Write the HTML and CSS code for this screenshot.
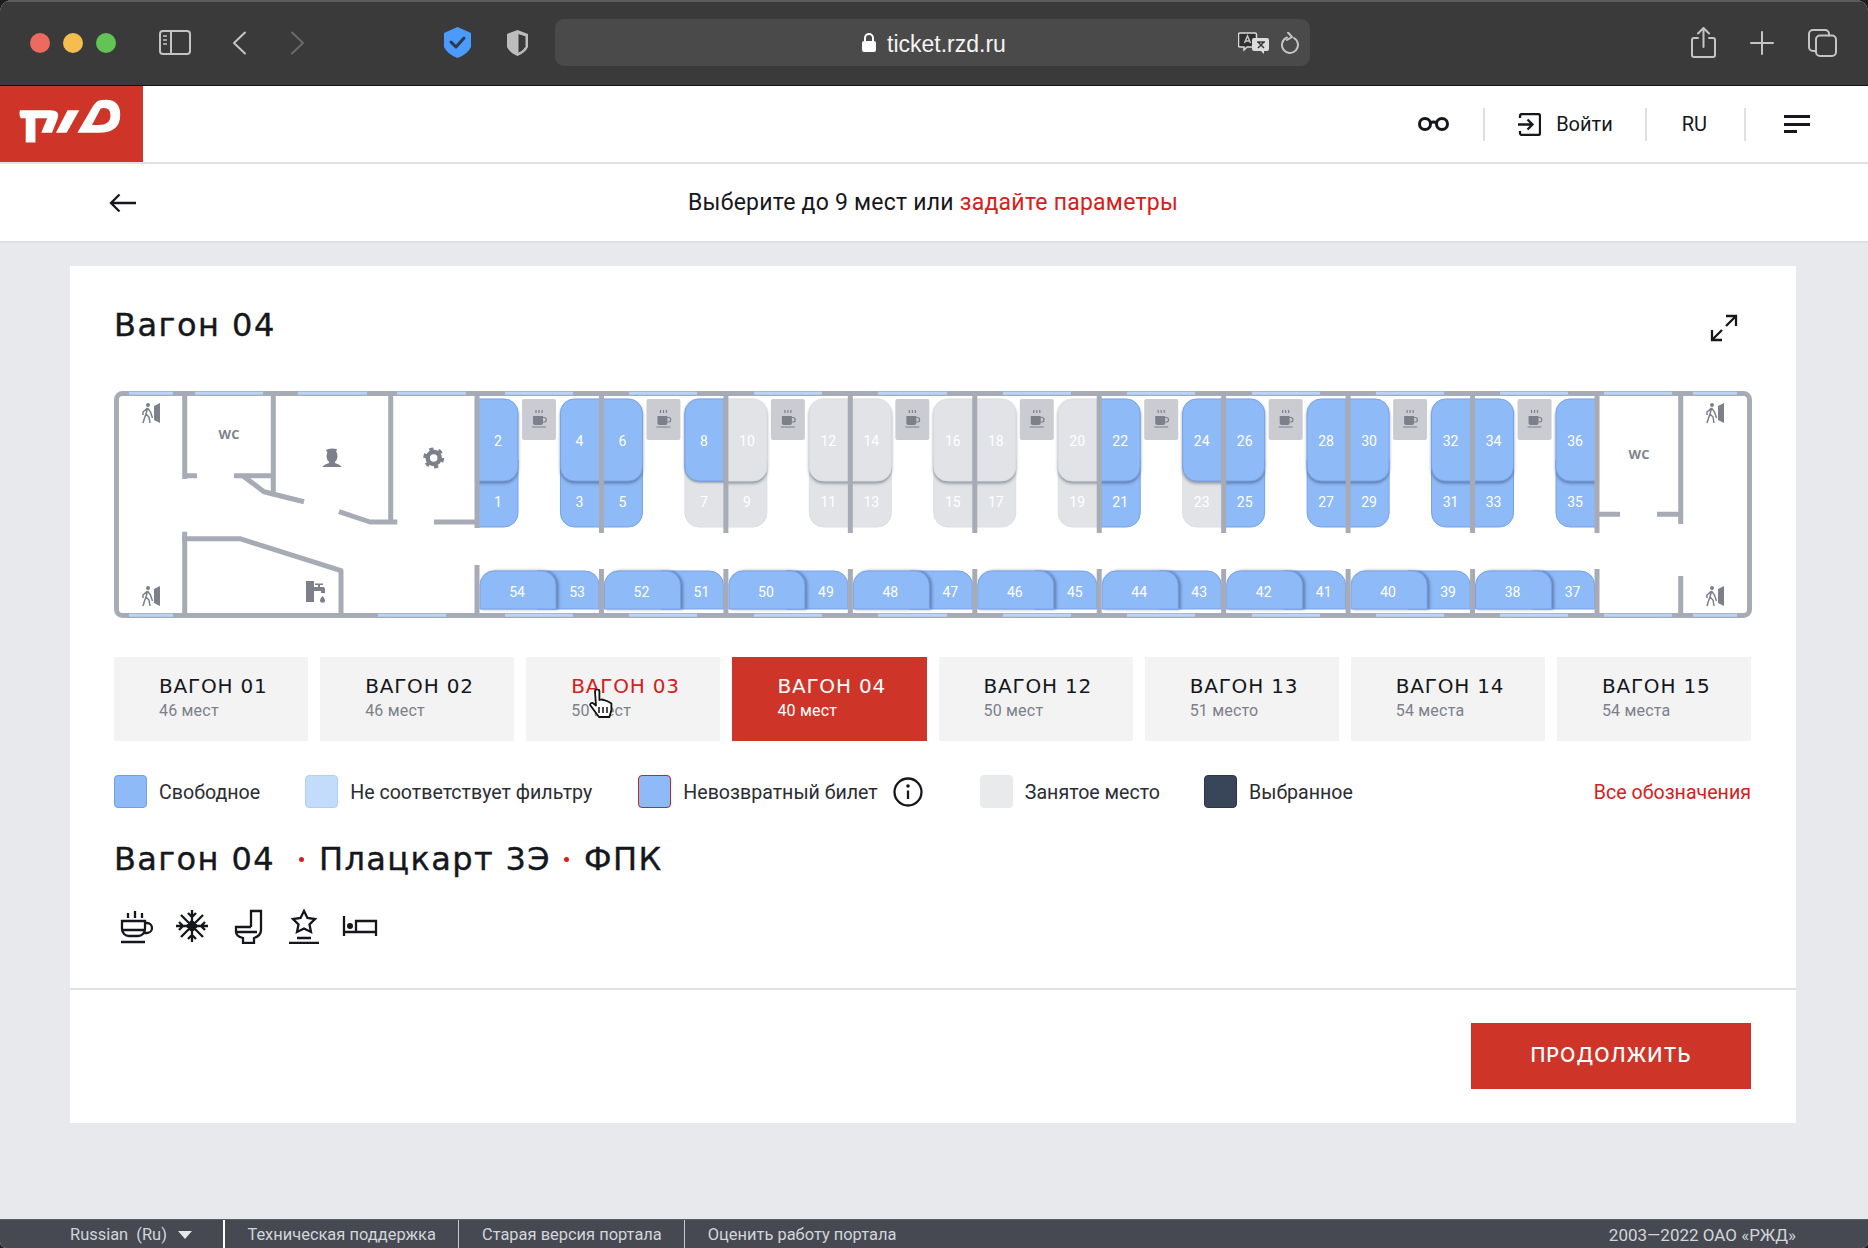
FILE: index.html
```html
<!DOCTYPE html>
<html lang="ru">
<head>
<meta charset="utf-8">
<title>РЖД — выбор мест</title>
<link rel="stylesheet" href="styles.css">
</head>
<body>
<div class="window">
  <div class="toolbar">
    <span class="light red"></span><span class="light yellow"></span><span class="light green"></span>
    <svg class="tb-sidebar" viewBox="0 0 32 25" width="32" height="25"><rect x="1" y="1" width="30" height="23" rx="3" class="tb-line"/><path d="M12 1V24" class="tb-line"/><path d="M4 6h4M4 10h4M4 14h4" class="tb-thin"/></svg>
    <svg class="tb-back" viewBox="0 0 15 24" width="15" height="24"><path d="M13 1.500 2 12l11 10.500" class="tb-line"/></svg>
    <svg class="tb-fwd" viewBox="0 0 15 24" width="15" height="24"><path d="M2 1.500 13 12 2 22.500" class="tb-dim"/></svg>
    <svg class="tb-shield1" viewBox="0 0 27 31" width="27" height="31"><path d="M13.500 0 27 6v14q-3 7-13.500 11Q3 27 0 20V6Z" class="blue-fill"/><path d="m7 15 5 5 8-9" class="check"/></svg>
    <svg class="tb-shield2" viewBox="0 0 23 28" width="23" height="28"><path d="M11.500 1 22 5v13q-3 6-10.500 9Q4 24 1 18V5Z" class="gray-fill"/><path d="M12 4.500 20 7v10.500q-2 4.500-8 7Z" class="dark-fill"/></svg>
    <div class="url">
      <svg class="lock" viewBox="0 0 14 19" width="14" height="19"><rect x="0" y="8" width="14" height="11" rx="2" class="white-fill"/><path d="M3 9V5a4 4 0 0 1 8 0v4" class="lock-arc"/></svg>
      <span class="url-text">ticket.rzd.ru</span>
      <svg class="translate" viewBox="0 0 31 22" width="31" height="22"><path d="M2 1h15a1.500 1.500 0 0 1 1.500 1.500v11a1.500 1.500 0 0 1-1.500 1.500H9l-3 3v-3H2A1.500 1.500 0 0 1 .5 13.500v-11A1.500 1.500 0 0 1 2 1Z" class="bubble-a"/><path d="M16 6h13a2 2 0 0 1 2 2v9a2 2 0 0 1-2 2h-3v3l-3-3h-7a2 2 0 0 1-2-2V8a2 2 0 0 1 2-2Z" class="white-soft"/><path d="m6.500 11 3-7 3 7M7.700 9h3.600" class="tb-thin"/><path d="m20 10 6 6M26 10l-6 6M19 10h8" class="x-mark"/></svg>
      <svg class="reload" viewBox="0 0 18 22" width="18" height="22"><path d="M6 5.500a8 8 0 1 0 7 .5" class="tb-line"/><path d="M7 .5 11 5 6 8" class="tb-line"/></svg>
    </div>
    <svg class="tb-share" viewBox="0 0 25 31" width="25" height="31"><path d="M7 11H3a2 2 0 0 0-2 2v15a2 2 0 0 0 2 2h19a2 2 0 0 0 2-2V13a2 2 0 0 0-2-2h-4" class="tb-line"/><path d="M12.500 20V1.500M7 6.500l5.500-5.500L18 6.500" class="tb-line"/></svg>
    <svg class="tb-plus" viewBox="0 0 24 24" width="24" height="24"><path d="M12 1v22M1 12h22" class="tb-line"/></svg>
    <svg class="tb-tabs" viewBox="0 0 29 28" width="29" height="28"><rect x="8" y="6.500" width="20" height="20.500" rx="4" class="tb-line"/><path d="M8 22H5a4 4 0 0 1-4-4V5a4 4 0 0 1 4-4h12a4 4 0 0 1 4 4v1.500" class="tb-line"/></svg>
  </div>

  <header class="site-header">
    <a class="logo">
      <svg viewBox="0 0 144 78" width="143" height="76"><path d="M19 25h31q11 0 7.500 9L52 48H41l6-15H35v25H25V33h-5q-2-3-1-8Z" class="white-fill"/><path d="M56 48l12-23h12L67 48Z" class="white-fill"/><path d="M78 48 92 24q4-7 8-9 22-5 22 15 0 18-22 18Z M93 40 102 23q10-2 10 7 0 10-12 10Z" class="logo-d"/></svg>
    </a>
    <div class="hd-tools">
      <svg class="ic-glasses" viewBox="0 0 33 14" width="33" height="14"><circle cx="8" cy="7" r="5.500" class="blk thick"/><circle cx="25" cy="7" r="5.500" class="blk thick"/><path d="M13 6q3.500-2 7 0" class="blk thick"/></svg>
      <span class="hd-sep sep-a"></span>
      <svg class="ic-enter" viewBox="0 0 24 23" width="24" height="23"><path d="M3 5V3a2 2 0 0 1 2-2h16a2 2 0 0 1 2 2v17a2 2 0 0 1-2 2H5a2 2 0 0 1-2-2v-2" class="blk"/><path d="M1 11.500h14M10.500 6.500l5 5-5 5" class="blk"/></svg>
      <span class="hd-text enter-text">Войти</span>
      <span class="hd-sep sep-b"></span>
      <span class="hd-text ru">RU</span>
      <span class="hd-sep sep-c"></span>
      <span class="burger"><i class="b1"></i><i class="b2"></i><i class="b3"></i></span>
    </div>
  </header>

  <div class="subheader">
    <svg class="back-arrow" viewBox="0 0 28 20" width="28" height="20"><path d="M27 10H2M10.500 1.500 2 10l8.500 8.500" class="blk"/></svg>
    <p class="sub-text">Выберите до 9 мест или <a class="red-link">задайте параметры</a></p>
  </div>

  <main class="main">
    <section class="card">
      <div class="card-body">
        <div class="card-head">
          <h1 class="wagon-title">Вагон 04</h1>
          <svg class="ic-expand" viewBox="0 0 28 28" width="28" height="28"><path d="M16 2h10v10M26 2 16 12M12 26H2V16M2 26l10-10" class="blk"/></svg>
        </div>

        <svg class="map" viewBox="114 391 1638 227" width="1638" height="227">
          <defs>
            <path id="ul" d="M41 0H14A14 14 0 0 0 0 14V68A14 14 0 0 0 14 82H41Z"/>
            <path id="ur" d="M0 0H27A14 14 0 0 1 41 14V68A14 14 0 0 1 27 82H0Z"/>
            <path id="ll" d="M41 0H0V53A14 14 0 0 0 14 67H41Z"/>
            <path id="lr" d="M0 0H41V53A14 14 0 0 1 27 67H0Z"/>
            <path id="big" d="M14 0H62A14 14 0 0 1 76 14V38H0V14A14 14 0 0 1 14 0Z"/>
            <path id="small" d="M0 0H48A14 14 0 0 1 62 14V38H0Z"/>
            <g id="coffee">
              <rect x="45" y="399" width="34" height="41" rx="2" class="cf-bg"/>
              <path d="M56 416h10v7a2 2 0 0 1-2 2h-6a2 2 0 0 1-2-2Z" class="cf-ink"/>
              <path d="M66 417.500h1a2.200 2.200 0 0 1 0 4.500h-1" class="cf-line"/>
              <path d="M55 427h14M59 410v3M62 410v3M65 410v3" class="cf-line"/>
            </g>
            <g id="exit">
              <circle cx="7" cy="2" r="2" class="cf-ink"/>
              <path d="M6.500 5 5 11l3 3 1 6M5 11l-1.500 4L2 20M6.500 5 2 9v3M6.500 5l3 4 2 6" class="ex-line"/>
              <path d="M13 3l6-3v20l-6-3Z" class="cf-ink"/>
            </g>
          </defs>

          <g transform="translate(477 0)">
            <use href="#lr" x="0" y="460" class="seat free"/><use href="#ur" x="0" y="399" class="seat free up"/>
            <use href="#coffee"/>
            <use href="#small" x="60" y="571" class="seat free"/><use href="#big" x="3" y="571" class="seat free bg"/>
            <text x="21" y="441">2</text><text x="21" y="502">1</text><text x="40" y="592">54</text><text x="100" y="592">53</text>
          </g>
          <g transform="translate(601.440 0)">
            <use href="#ll" x="-41" y="460" class="seat free"/><use href="#ul" x="-41" y="399" class="seat free up"/>
            <use href="#lr" x="0" y="460" class="seat free"/><use href="#ur" x="0" y="399" class="seat free up"/>
            <use href="#coffee"/>
            <use href="#small" x="60" y="571" class="seat free"/><use href="#big" x="3" y="571" class="seat free bg"/>
            <text x="-22" y="441">4</text><text x="-22" y="502">3</text><text x="21" y="441">6</text><text x="21" y="502">5</text><text x="40" y="592">52</text><text x="100" y="592">51</text>
          </g>
          <g transform="translate(725.890 0)">
            <use href="#ll" x="-41" y="460" class="seat taken"/><use href="#ul" x="-41" y="399" class="seat free up-flat"/>
            <use href="#lr" x="0" y="460" class="seat taken"/><use href="#ur" x="0" y="399" class="seat taken up"/>
            <use href="#coffee"/>
            <use href="#small" x="60" y="571" class="seat free"/><use href="#big" x="3" y="571" class="seat free bg"/>
            <text x="-22" y="441">8</text><text x="-22" y="502">7</text><text x="21" y="441">10</text><text x="21" y="502">9</text><text x="40" y="592">50</text><text x="100" y="592">49</text>
          </g>
          <g transform="translate(850.330 0)">
            <use href="#ll" x="-41" y="460" class="seat taken"/><use href="#ul" x="-41" y="399" class="seat taken up"/>
            <use href="#lr" x="0" y="460" class="seat taken"/><use href="#ur" x="0" y="399" class="seat taken up"/>
            <use href="#coffee"/>
            <use href="#small" x="60" y="571" class="seat free"/><use href="#big" x="3" y="571" class="seat free bg"/>
            <text x="-22" y="441">12</text><text x="-22" y="502">11</text><text x="21" y="441">14</text><text x="21" y="502">13</text><text x="40" y="592">48</text><text x="100" y="592">47</text>
          </g>
          <g transform="translate(974.780 0)">
            <use href="#ll" x="-41" y="460" class="seat taken"/><use href="#ul" x="-41" y="399" class="seat taken up"/>
            <use href="#lr" x="0" y="460" class="seat taken"/><use href="#ur" x="0" y="399" class="seat taken up"/>
            <use href="#coffee"/>
            <use href="#small" x="60" y="571" class="seat free"/><use href="#big" x="3" y="571" class="seat free bg"/>
            <text x="-22" y="441">16</text><text x="-22" y="502">15</text><text x="21" y="441">18</text><text x="21" y="502">17</text><text x="40" y="592">46</text><text x="100" y="592">45</text>
          </g>
          <g transform="translate(1099.220 0)">
            <use href="#ll" x="-41" y="460" class="seat taken"/><use href="#ul" x="-41" y="399" class="seat taken up"/>
            <use href="#lr" x="0" y="460" class="seat free"/><use href="#ur" x="0" y="399" class="seat free up"/>
            <use href="#coffee"/>
            <use href="#small" x="60" y="571" class="seat free"/><use href="#big" x="3" y="571" class="seat free bg"/>
            <text x="-22" y="441">20</text><text x="-22" y="502">19</text><text x="21" y="441">22</text><text x="21" y="502">21</text><text x="40" y="592">44</text><text x="100" y="592">43</text>
          </g>
          <g transform="translate(1223.670 0)">
            <use href="#ll" x="-41" y="460" class="seat taken"/><use href="#ul" x="-41" y="399" class="seat free up"/>
            <use href="#lr" x="0" y="460" class="seat free"/><use href="#ur" x="0" y="399" class="seat free up"/>
            <use href="#coffee"/>
            <use href="#small" x="60" y="571" class="seat free"/><use href="#big" x="3" y="571" class="seat free bg"/>
            <text x="-22" y="441">24</text><text x="-22" y="502">23</text><text x="21" y="441">26</text><text x="21" y="502">25</text><text x="40" y="592">42</text><text x="100" y="592">41</text>
          </g>
          <g transform="translate(1348.110 0)">
            <use href="#ll" x="-41" y="460" class="seat free"/><use href="#ul" x="-41" y="399" class="seat free up"/>
            <use href="#lr" x="0" y="460" class="seat free"/><use href="#ur" x="0" y="399" class="seat free up"/>
            <use href="#coffee"/>
            <use href="#small" x="60" y="571" class="seat free"/><use href="#big" x="3" y="571" class="seat free bg"/>
            <text x="-22" y="441">28</text><text x="-22" y="502">27</text><text x="21" y="441">30</text><text x="21" y="502">29</text><text x="40" y="592">40</text><text x="100" y="592">39</text>
          </g>
          <g transform="translate(1472.560 0)">
            <use href="#ll" x="-41" y="460" class="seat free"/><use href="#ul" x="-41" y="399" class="seat free up"/>
            <use href="#lr" x="0" y="460" class="seat free"/><use href="#ur" x="0" y="399" class="seat free up"/>
            <use href="#coffee"/>
            <use href="#small" x="60" y="571" class="seat free"/><use href="#big" x="3" y="571" class="seat free bg"/>
            <text x="-22" y="441">32</text><text x="-22" y="502">31</text><text x="21" y="441">34</text><text x="21" y="502">33</text><text x="40" y="592">38</text><text x="100" y="592">37</text>
          </g>
          <g transform="translate(1597 0)">
            <use href="#ll" x="-41" y="460" class="seat free"/><use href="#ul" x="-41" y="399" class="seat free up"/>
            <text x="-22" y="441">36</text><text x="-22" y="502">35</text>
          </g>

          <path d="M184.700 396V479M184.700 475.700H197M234 475.700H273.300M273.300 396V491.700M243 476 264 491.700 304 501.700M339 511.700 370 522H397.300M390.700 396V522M434 522H477M477 391V528M184.700 531.700V616M182 538.700H240L341 570.700V616M477 565V616" class="wall"/>
          <path d="M1597 391V533M1597 514.300H1620M1657 514.300H1680.700M1680.700 391V524M1597 569V616M1680.700 576V616" class="wall"/>
          <path d="M601.440 391V533M725.890 391V533M850.330 391V533M974.780 391V533M1099.220 391V533M1223.670 391V533M1348.110 391V533M1472.560 391V533M601.440 569V616M725.890 569V616M850.330 569V616M974.780 569V616M1099.220 569V616M1223.670 569V616M1348.110 569V616M1472.560 569V616" class="wall"/>
          <rect x="116.500" y="393.500" width="1633" height="222" rx="6" class="wall"/>

          <path d="M129 393.300h44M195 393.300h68M298 393.300h69M397 393.300h69M505 393.300h68M629 393.300h68M754 393.300h68M878 393.300h69M1003 393.300h68M1127 393.300h68M1252 393.300h68M1376 393.300h68M1500 393.300h68M1604 393.300h68M1693 393.300h44" class="glass"/>
          <path d="M129 615.300h44M378 615.300h68M505 615.300h68M629 615.300h68M754 615.300h68M878 615.300h69M1003 615.300h68M1127 615.300h68M1252 615.300h68M1376 615.300h68M1500 615.300h68M1604 615.300h68M1693 615.300h44" class="glass"/>

          <use href="#exit" x="141" y="403"/><use href="#exit" x="141" y="586"/><use href="#exit" x="1705" y="403"/><use href="#exit" x="1705" y="586"/>
          <text x="229" y="434" class="wc">WC</text>
          <text x="1639" y="454" class="wc">WC</text>
          <ellipse cx="332" cy="456" rx="5.500" ry="7" class="cf-ink"/>
          <path d="M326 450q3-2.500 11-1l-1 3h-9ZM322 467q3-3 7-4v-3h6v3q4 1 7 4Z" class="cf-ink"/>
          <circle cx="433.700" cy="458" r="6" class="gear"/>
          <circle cx="433.700" cy="458" r="8.500" class="gear-teeth"/>
          <path d="M306 581h8v6h4v-2h-3v-1.500h8v1.500h-3v2h3a2 2 0 0 1 2 2v4h-4v-2h-7v11h-8Z" class="cf-ink"/>
          <path d="M322.500 596c2 2.500 2.500 3.500 2.500 4.300a2.500 2.500 0 0 1-5 0c0-.8.500-1.800 2.500-4.300Z" class="cf-ink"/>
        </svg>

        <nav class="tabs">
          <a class="tab"><b>ВАГОН 01</b><small>46 мест</small></a>
          <a class="tab"><b>ВАГОН 02</b><small>46 мест</small></a>
          <a class="tab hover"><b>ВАГОН 03</b><small>50 мест</small>
            <svg class="cursor" viewBox="0 0 26 30" width="26" height="30"><path d="M6 2.500a2.200 2.200 0 0 1 4.400 0V11l2-.5 2.500.5 2.500.8 2.500 1.200 2.500 1.500V21l-2 7H10l-3-4-5.500-7.500c-1-1.500 1-3.500 3-2l2.500 2Z" class="cursor-body"/><path d="M10 18v6M14 18v6M18 18v6" class="cursor-lines"/></svg>
          </a>
          <a class="tab active"><b>ВАГОН 04</b><small>40 мест</small></a>
          <a class="tab"><b>ВАГОН 12</b><small>50 мест</small></a>
          <a class="tab"><b>ВАГОН 13</b><small>51 место</small></a>
          <a class="tab"><b>ВАГОН 14</b><small>54 места</small></a>
          <a class="tab"><b>ВАГОН 15</b><small>54 места</small></a>
        </nav>

        <div class="legend">
          <span class="swatch sw-free"></span><span class="lg-text lg-1">Свободное</span>
          <span class="swatch sw-nofilter"></span><span class="lg-text lg-2">Не соответствует фильтру</span>
          <span class="swatch sw-nonref"></span><span class="lg-text lg-3">Невозвратный билет</span>
          <svg class="ic-info" viewBox="0 0 30 30" width="30" height="30"><circle cx="15" cy="15" r="13.500" class="blk"/><path d="M15 13.500V22" class="blk"/><circle cx="15" cy="9" r="1.800" class="blk-fill"/></svg>
          <span class="swatch sw-taken"></span><span class="lg-text lg-4">Занятое место</span>
          <span class="swatch sw-sel"></span><span class="lg-text lg-5">Выбранное</span>
          <a class="all-link">Все обозначения</a>
        </div>

        <h2 class="info"><span>Вагон 04</span><i class="dot dot-a"></i><span>Плацкарт 3Э</span><i class="dot dot-b"></i><span>ФПК</span></h2>

        <div class="amenities">
          <svg viewBox="0 0 36 36" width="36" height="36"><path d="M4 13H27V21a7 7 0 0 1-7 7H11a7 7 0 0 1-7-7ZM27 15h2a5 5 0 0 1 0 10h-3M4 22H27M3 34H27M10 5v5M17 3v7M24 5v5" class="blk"/></svg>
          <svg viewBox="0 0 36 36" width="36" height="36"><path d="M18 2V34M2 18H34M7 7 29 29M29 7 7 29M14 5l4 4 4-4M14 31l4-4 4 4M5 14l4 4-4 4M31 14l-4 4 4 4M18 13l5 5-5 5-5-5Z" class="blk"/></svg>
          <svg viewBox="0 0 36 36" width="36" height="36"><path d="M21 19V3H31V22C31 27 27 29 24 30V35H13V30C9 29 6 27 6 24V19H21M6 24H27" class="blk"/></svg>
          <svg viewBox="0 0 36 36" width="36" height="36"><path d="m18 3 3.500 7 7.500 1-5.500 5.500 1.500 7.500-7-3.500-7 3.500 1.500-7.500L7 11l7.500-1ZM11 30H25M3 35H33" class="blk"/></svg>
          <svg viewBox="0 0 36 36" width="36" height="36"><path d="M2 8V28M2 24H34V28M34 24V13H14V24" class="blk"/><circle cx="8" cy="18" r="3" class="blk-fill"/></svg>
        </div>
      </div>
      <div class="card-foot">
        <a class="btn">ПРОДОЛЖИТЬ</a>
      </div>
    </section>
  </main>

  <footer class="footer">
    <span class="ft-lang">Russian&nbsp; (Ru)</span><i class="ft-tri"></i>
    <a class="ft-link first">Техническая поддержка</a>
    <a class="ft-link">Старая версия портала</a>
    <a class="ft-link">Оценить работу портала</a>
    <span class="ft-copy">2003—2022 ОАО «РЖД»</span>
  </footer>
</div>
</body>
</html>
```

FILE: styles.css
```css
* { box-sizing: border-box; }
html, body { margin: 0; padding: 0; background: #1d1d1f; }
.window {
  width: 1868px; height: 1248px; display: flex; flex-direction: column;
  background: #e8e9ed; border-radius: 12px 12px 6px 6px; overflow: hidden;
  font-family: Roboto, "Noto Sans", sans-serif; color: #15171c;
}
svg { display: block; flex: none; fill: none; }
p, h1, h2 { margin: 0; font-weight: 400; }

/* browser toolbar */
.toolbar {
  height: 86px; flex: none; display: flex; align-items: center; padding: 0 0 2px 30px;
  background: #3a3a3a; border-top: 2px solid #5c5c5c; border-bottom: 1px solid #141414;
}
.light { width: 20px; height: 20px; border-radius: 50%; margin-right: 13px; }
.red { background: #ee6a5f; } .yellow { background: #f5bd4f; } .green { background: #61c454; }
.tb-line { fill: none; stroke: #c4c4c4; stroke-width: 2; stroke-linecap: round; stroke-linejoin: round; }
.tb-thin { fill: none; stroke: #c4c4c4; stroke-width: 1.500; }
.tb-dim { fill: none; stroke: #6a6a6a; stroke-width: 2; stroke-linecap: round; stroke-linejoin: round; }
.tb-sidebar { margin-left: 30px; }
.tb-back { margin-left: 40.500px; }
.tb-fwd { margin-left: 43.500px; }
.tb-shield1 { margin-left: 139px; }
.tb-shield2 { margin-left: 35px; }
.blue-fill { fill: #4a9bfb; }
.check { stroke: #2e3a4a; stroke-width: 3; stroke-linecap: round; stroke-linejoin: round; fill: none; }
.gray-fill { fill: #bdbdbd; }
.dark-fill { fill: #3a3a3a; stroke: #bdbdbd; stroke-width: 1; }
.url {
  margin-left: 25.500px; width: 755px; height: 47px; display: flex; align-items: center;
  padding: 0 11px 0 307px; background: #4a4a4a; border-radius: 9px;
}
.white-fill { fill: #fff; }
.lock-arc { fill: none; stroke: #fff; stroke-width: 2; }
.url-text { margin: 3px 0 0 11.500px; font: 400 23px/1 "Liberation Sans", sans-serif; color: #f4f4f4; }
.translate { margin-left: auto; }
.bubble-a { fill: #2f2f2f; stroke: #d8d8d8; stroke-width: 1.500; }
.white-soft { fill: #dcdcdc; }
.x-mark { stroke: #3a3a3a; stroke-width: 1.500; fill: none; }
.reload { margin-left: 12px; }
.tb-share { margin-left: 381px; }
.tb-plus { margin-left: 34px; }
.tb-tabs { margin-left: 34.500px; }

/* site header */
.site-header {
  height: 78px; flex: none; display: flex; align-items: center; padding-right: 58px;
  background: #fff; border-bottom: 2px solid #e0e1e6;
}
.logo { width: 143px; height: 76px; background: #cf3429; }
.logo-d { fill: #fff; fill-rule: evenodd; }
.hd-tools { margin-left: auto; display: flex; align-items: center; }
.blk { fill: none; stroke: #15171c; stroke-width: 2.300; }
.thick { stroke-width: 3; }
.blk-fill { fill: #15171c; }
.hd-sep { width: 2px; height: 33px; background: #dfe0e4; }
.sep-a { margin-left: 33px; }
.ic-enter { margin-left: 32px; }
.hd-text { font-size: 20px; color: #15171c; }
.enter-text { margin-left: 15px; }
.sep-b { margin-left: 32px; }
.ru { margin-left: 35px; }
.sep-c { margin-left: 37px; }
.burger { margin-left: 38px; width: 26px; display: flex; flex-direction: column; gap: 4.500px; }
.burger i { display: block; height: 3px; background: #15171c; }
.b3 { width: 13px; }

/* sub header */
.subheader {
  height: 79px; flex: none; display: flex; align-items: center; padding-left: 109px;
  background: #fff; border-bottom: 2px solid #e0e1e6;
}
.sub-text { margin-left: 551px; font-size: 23px; letter-spacing: .24px; }
.red-link { color: #d5201c; }

/* main */
.main { flex: 1; padding: 23px 72px 0 70px; }
.card { width: 1726px; background: #fff; }
.card-body { padding: 38px 44px 44px; border-bottom: 2px solid #e0e1e6; }
.card-head { height: 40px; display: flex; align-items: center; justify-content: space-between; padding-right: 14px; }
.ic-expand { margin-top: 7px; }
.wagon-title, .info { font: 400 32px/40px "DejaVu Sans", sans-serif; letter-spacing: 1.500px; -webkit-text-stroke: .4px #15171c; }
.wagon-title { padding-top: 1px; }
.info { letter-spacing: 1.400px; }
.map { margin-top: 47px; }
.map text { fill: #fff; font: 400 14px Roboto, sans-serif; text-anchor: middle; dominant-baseline: central; }
.map .wc { fill: #7f838d; font: 700 13px "Open Sans", sans-serif; }
.wall { fill: none; stroke: #a7abb6; stroke-width: 5; stroke-linejoin: round; }
.glass { fill: none; stroke: #b8d5f7; stroke-width: 3; }
.seat { stroke-width: 1; }
.free { fill: #8fbaf8; stroke: #74a3ea; }
.taken { fill: #e1e3e6; stroke: #dcdee2; }
.up { filter: drop-shadow(0 2px 1.500px rgba(40, 50, 70, .45)); }
.up-flat { filter: drop-shadow(0 1px 1px rgba(40, 50, 70, .5)); }
.bg { filter: drop-shadow(2px 0 1.500px rgba(40, 50, 80, .45)); }
.cf-bg { fill: #cbccd1; }
.cf-ink { fill: #7d808a; }
.cf-line { fill: none; stroke: #7d808a; stroke-width: 1.200; }
.ex-line { fill: none; stroke: #7d808a; stroke-width: 1.500; }
.gear { fill: none; stroke: #7d808a; stroke-width: 4.500; }
.gear-teeth { fill: none; stroke: #7d808a; stroke-width: 4; stroke-dasharray: 4 4.900; }

/* wagon tabs */
.tabs { margin-top: 39px; width: 1637px; display: grid; grid-template-columns: repeat(8, 1fr); gap: 12px; }
.tab {
  position: relative; height: 84px; padding: 17px 0 0 45px; display: flex; flex-direction: column;
  background: #f3f3f4; color: #15171c;
}
.tab b { font: 400 20px/24px "DejaVu Sans", sans-serif; letter-spacing: .8px; white-space: nowrap; }
.tab small { font: 400 16px/25px Roboto, sans-serif; color: #7d8088; letter-spacing: .2px; }
.hover b { color: #d5201c; }
.active { background: #cf3429; color: #fff; }
.active small { color: #fff; }
.cursor { position: absolute; left: 63px; top: 32px; }
.cursor-body { fill: #fff; stroke: #111; stroke-width: 1.800; stroke-linejoin: round; }
.cursor-lines { fill: none; stroke: #111; stroke-width: 1.500; }

/* legend */
.legend { margin-top: 34px; width: 1637px; height: 33px; display: flex; align-items: center; }
.swatch { width: 33px; height: 33px; border-radius: 4px; border: 1px solid; flex: none; }
.sw-free { background: #8fbaf8; border-color: #6f9fe8; }
.sw-nofilter { background: #c3dcfb; border-color: #b0cff7; margin-left: 45px; }
.sw-nonref { background: #8fbaf8; border-color: #d5201c; margin-left: 46px; }
.sw-taken { background: #e8eaec; border-color: #e8eaec; margin-left: 57px; }
.sw-sel { background: #39465a; border-color: #2c3646; margin-left: 44px; }
.lg-text { margin-left: 12px; padding-top: 1px; font-size: 19.600px; color: #2b2d33; }
.ic-info { margin-left: 15px; }
.all-link { margin-left: auto; padding-top: 1px; font-size: 19.600px; color: #d5201c; }

/* info */
.info { margin-top: 31px; display: flex; align-items: center; }
.dot { width: 5px; height: 5px; border-radius: 50%; background: #d5201c; }
.dot-a { margin: 0 15px 0 24px; }
.dot-b { margin: 0 15px 0 13px; }
.amenities { margin-top: 29px; padding-left: 4px; display: flex; gap: 20px; }

/* footer of card */
.card-foot { padding: 33px 45px 34px 44px; display: flex; justify-content: flex-end; }
.btn {
  width: 280px; height: 66px; display: flex; align-items: center; justify-content: center;
  background: #cf3429; color: #fff; font: 500 20px Inter, sans-serif; letter-spacing: 1px; padding-bottom: 2px;
}

/* page footer */
.footer {
  height: 29px; flex: none; display: flex; align-items: center; padding: 1px 72px 0 70px;
  background: #464952; color: #d3d5da; font-size: 16.450px; border-top: 1px solid #5a5d66;
}
.ft-tri { margin-left: 11px; width: 0; height: 0; border: 7px solid transparent; border-top: 8px solid #e6e7ea; border-bottom: 0; }
.ft-link { padding-left: 22.500px; margin-left: 22.500px; border-left: 1px solid #c8cad0; line-height: 29px; }
.first { margin-left: 31px; border-left: 2px solid #fff; }
.ft-copy { margin-left: auto; font-size: 17px; }
```
